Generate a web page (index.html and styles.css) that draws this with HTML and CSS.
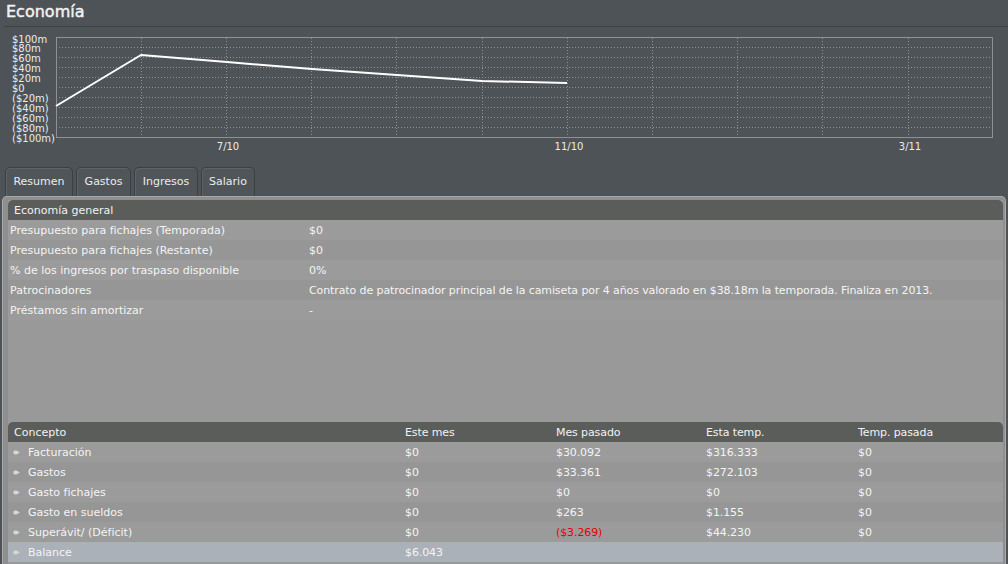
FILE: index.html
```html
<!DOCTYPE html>
<html lang="es">
<head>
<meta charset="utf-8">
<title>Economía</title>
<link rel="stylesheet" href="styles.css">
</head>
<body>
<div class="page">
  <h1 class="title">Economía</h1>
  <div class="chart">
    <svg class="chart-svg" width="1008" height="138" viewBox="0 27 1008 138" xmlns="http://www.w3.org/2000/svg">
      <g class="grid-h">
        <line x1="56" y1="47.5" x2="993" y2="47.5"/>
        <line x1="56" y1="57.5" x2="993" y2="57.5"/>
        <line x1="56" y1="67.5" x2="993" y2="67.5"/>
        <line x1="56" y1="77.5" x2="993" y2="77.5"/>
        <line x1="56" y1="87.5" x2="993" y2="87.5"/>
        <line x1="56" y1="97.5" x2="993" y2="97.5"/>
        <line x1="56" y1="107.5" x2="993" y2="107.5"/>
        <line x1="56" y1="117.5" x2="993" y2="117.5"/>
        <line x1="56" y1="127.5" x2="993" y2="127.5"/>
      </g>
      <g class="grid-v">
        <line x1="141.5" y1="38" x2="141.5" y2="137"/>
        <line x1="226.5" y1="38" x2="226.5" y2="137"/>
        <line x1="311.5" y1="38" x2="311.5" y2="137"/>
        <line x1="396.5" y1="38" x2="396.5" y2="137"/>
        <line x1="482.5" y1="38" x2="482.5" y2="137"/>
        <line x1="567.5" y1="38" x2="567.5" y2="137"/>
        <line x1="652.5" y1="38" x2="652.5" y2="137"/>
        <line x1="737.5" y1="38" x2="737.5" y2="137"/>
        <line x1="822.5" y1="38" x2="822.5" y2="137"/>
        <line x1="908.5" y1="38" x2="908.5" y2="137"/>
      </g>
      <rect class="plot-frame" x="56.5" y="37.5" width="936" height="100"/>
      <polyline class="series" points="56,106 141,55 227,62 312,69 397,75 482,81 567,83"/>
      <g class="y-labels">
        <text x="12" y="43">$100m</text>
        <text x="12" y="52">$80m</text>
        <text x="12" y="62">$60m</text>
        <text x="12" y="72">$40m</text>
        <text x="12" y="82">$20m</text>
        <text x="12" y="92">$0</text>
        <text x="12" y="102">($20m)</text>
        <text x="12" y="112">($40m)</text>
        <text x="12" y="122">($60m)</text>
        <text x="12" y="132">($80m)</text>
        <text x="12" y="142">($100m)</text>
      </g>
      <g class="x-labels">
        <text x="228" y="150">7/10</text>
        <text x="569" y="150">11/10</text>
        <text x="910" y="150">3/11</text>
      </g>
    </svg>
  </div>

  <div class="tabs">
    <div class="tab tab-active w-resumen">Resumen</div>
    <div class="tab w-gastos">Gastos</div>
    <div class="tab w-ingresos">Ingresos</div>
    <div class="tab w-salario">Salario</div>
  </div>

  <div class="panel">
    <div class="panel-inner">
      <div class="section-head">Economía general</div>
      <div class="kv-row light"><span class="k">Presupuesto para fichajes (Temporada)</span><span class="v">$0</span></div>
      <div class="kv-row dark"><span class="k">Presupuesto para fichajes (Restante)</span><span class="v">$0</span></div>
      <div class="kv-row light"><span class="k">% de los ingresos por traspaso disponible</span><span class="v">0%</span></div>
      <div class="kv-row dark"><span class="k">Patrocinadores</span><span class="v">Contrato de patrocinador principal de la camiseta por 4 años valorado en $38.18m la temporada. Finaliza en 2013.</span></div>
      <div class="kv-row light"><span class="k">Préstamos sin amortizar</span><span class="v">-</span></div>

      <div class="spacer"></div>

      <div class="tbl-head">
        <span class="c-label">Concepto</span>
        <span class="c-num">Este mes</span>
        <span class="c-num">Mes pasado</span>
        <span class="c-num">Esta temp.</span>
        <span class="c-num">Temp. pasada</span>
      </div>
      <div class="tbl-row light">
        <span class="c-label"><svg class="bullet" width="7" height="5" viewBox="0 0 7 5"><path d="M0.3 2.5C0.3 0.8 1.5 0.5 3.5 0.5L6.9 2.5L3.5 4.5C1.5 4.5 0.3 4.2 0.3 2.5Z"/></svg>Facturación</span>
        <span class="c-num">$0</span><span class="c-num">$30.092</span><span class="c-num">$316.333</span><span class="c-num">$0</span>
      </div>
      <div class="tbl-row dark">
        <span class="c-label"><svg class="bullet" width="7" height="5" viewBox="0 0 7 5"><path d="M0.3 2.5C0.3 0.8 1.5 0.5 3.5 0.5L6.9 2.5L3.5 4.5C1.5 4.5 0.3 4.2 0.3 2.5Z"/></svg>Gastos</span>
        <span class="c-num">$0</span><span class="c-num">$33.361</span><span class="c-num">$272.103</span><span class="c-num">$0</span>
      </div>
      <div class="tbl-row light">
        <span class="c-label"><svg class="bullet" width="7" height="5" viewBox="0 0 7 5"><path d="M0.3 2.5C0.3 0.8 1.5 0.5 3.5 0.5L6.9 2.5L3.5 4.5C1.5 4.5 0.3 4.2 0.3 2.5Z"/></svg>Gasto fichajes</span>
        <span class="c-num">$0</span><span class="c-num">$0</span><span class="c-num">$0</span><span class="c-num">$0</span>
      </div>
      <div class="tbl-row dark">
        <span class="c-label"><svg class="bullet" width="7" height="5" viewBox="0 0 7 5"><path d="M0.3 2.5C0.3 0.8 1.5 0.5 3.5 0.5L6.9 2.5L3.5 4.5C1.5 4.5 0.3 4.2 0.3 2.5Z"/></svg>Gasto en sueldos</span>
        <span class="c-num">$0</span><span class="c-num">$263</span><span class="c-num">$1.155</span><span class="c-num">$0</span>
      </div>
      <div class="tbl-row light">
        <span class="c-label"><svg class="bullet" width="7" height="5" viewBox="0 0 7 5"><path d="M0.3 2.5C0.3 0.8 1.5 0.5 3.5 0.5L6.9 2.5L3.5 4.5C1.5 4.5 0.3 4.2 0.3 2.5Z"/></svg>Superávit/ (Déficit)</span>
        <span class="c-num">$0</span><span class="c-num neg">($3.269)</span><span class="c-num">$44.230</span><span class="c-num">$0</span>
      </div>
      <div class="tbl-row balance">
        <span class="c-label"><svg class="bullet" width="7" height="5" viewBox="0 0 7 5"><path d="M0.3 2.5C0.3 0.8 1.5 0.5 3.5 0.5L6.9 2.5L3.5 4.5C1.5 4.5 0.3 4.2 0.3 2.5Z"/></svg>Balance</span>
        <span class="c-num">$6.043</span><span class="c-num"></span><span class="c-num"></span><span class="c-num"></span>
      </div>
    </div>
  </div>
</div>
</body>
</html>
```
FILE: styles.css
```css
* { box-sizing: border-box; }

html, body {
  margin: 0;
  padding: 0;
  background: #4e5357;
  overflow: hidden;
}

body {
  width: 1008px;
  height: 564px;
  font-family: "DejaVu Sans", "Noto Sans", sans-serif;
  font-size: 11px;
  color: #f4f4f4;
}

.page {
  width: 1008px;
  height: 564px;
}

.title {
  margin: 0 0 0 4px;
  padding-left: 2px;
  height: 27px;
  line-height: 23px;
  font-size: 16px;
  font-weight: normal;
  -webkit-text-stroke: 0.45px #f2f2f2;
  color: #f2f2f2;
  border-bottom: 1px solid #3e4245;
}

.chart {
  height: 138px;
}

.chart-svg {
  display: block;
}

.grid-h line,
.grid-v line {
  stroke: #8e9295;
  stroke-width: 1;
  stroke-dasharray: 1 2;
}

.plot-frame {
  fill: none;
  stroke: #8e9295;
  stroke-width: 1;
}

.series {
  fill: none;
  stroke: #ffffff;
  stroke-width: 2;
  stroke-linejoin: round;
}

.y-labels text {
  font-family: "DejaVu Sans", sans-serif;
  font-size: 10px;
  fill: #ececec;
}

.x-labels text {
  font-family: "DejaVu Sans", sans-serif;
  font-size: 10px;
  fill: #ececec;
  text-anchor: middle;
}

.tabs {
  display: flex;
  gap: 3px;
  margin-top: 2px;
  padding-left: 5px;
  height: 29px;
}

.tab {
  height: 29px;
  line-height: 27px;
  text-align: center;
  background: #50555a;
  border: 1px solid #3c4043;
  border-bottom: none;
  border-radius: 5px 5px 0 0;
  color: #ececec;
  font-size: 11px;
  box-shadow: inset 1px 1px 0 #5d6266;
}

.w-resumen { width: 68px; }
.w-gastos { width: 55px; }
.w-ingresos { width: 64px; }
.w-salario { width: 54px; }

.panel {
  margin-left: 2px;
  width: 1004px;
  height: 368px;
  background: #8f8f8f;
  border: 1px solid #a9a9a9;
  border-bottom: none;
  border-radius: 5px 5px 0 0;
  padding: 3px 2px 0 5px;
}

.panel-inner {
  background: #999999;
  height: 100%;
}

.section-head {
  height: 20px;
  padding-top: 1px;
  line-height: 19px;
  padding-left: 6px;
  background: #5b5d5b;
  border-radius: 5px 5px 0 0;
  color: #f2f2f2;
}

.kv-row {
  display: grid;
  grid-template-columns: 301px 1fr;
  height: 20px;
  padding-top: 1px;
  line-height: 19px;
}

.kv-row .k {
  padding-left: 2px;
}

.kv-row .v,
.c-num {
  font-family: "DejaVu Sans", sans-serif;
  font-size: 11px;
  letter-spacing: -0.1px;
  white-space: nowrap;
}

.light { background: #9b9b9b; }
.dark { background: #969696; }

.spacer {
  height: 102px;
}

.tbl-head,
.tbl-row {
  display: grid;
  grid-template-columns: 397px 151px 150px 152px 1fr;
  height: 20px;
  padding-top: 1px;
  line-height: 19px;
}

.tbl-head {
  background: #5b5d5b;
  border-radius: 5px 5px 0 0;
  color: #f2f2f2;
}

.tbl-head .c-label {
  padding-left: 6px;
}

.tbl-row .c-label {
  display: flex;
  align-items: center;
  gap: 8px;
  padding-left: 5px;
}

.bullet {
  display: block;
  fill: #d6d6d6;
}

.balance {
  background: #aab1b9;
}

.neg {
  color: #e80000;
}
```
